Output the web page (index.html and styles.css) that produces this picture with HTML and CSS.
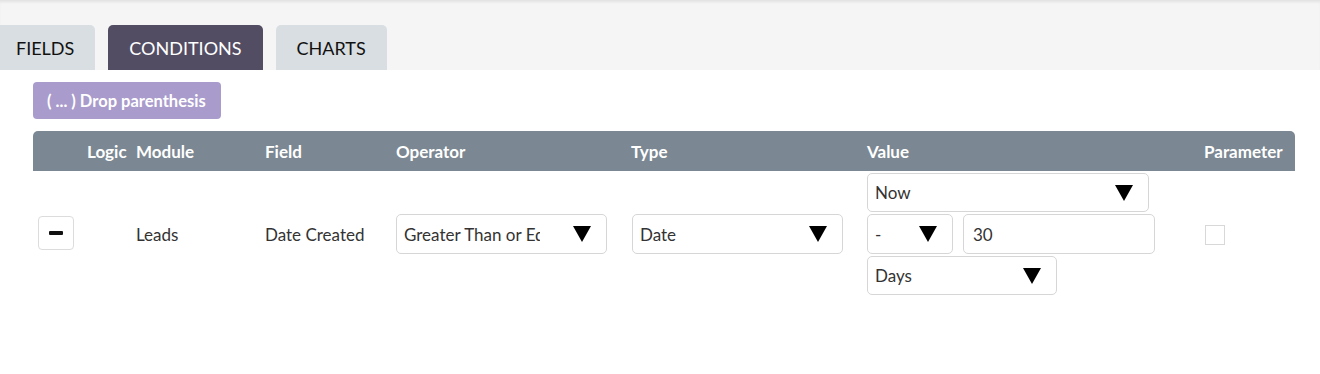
FILE: index.html
```html
<!DOCTYPE html>
<html>
<head>
<meta charset="utf-8">
<link rel="stylesheet" href="styles.css">
</head>
<body>
<div class="band">
  <div class="tabs">
    <div class="tab first">FIELDS</div>
    <div class="tab active">CONDITIONS</div>
    <div class="tab">CHARTS</div>
  </div>
</div>
<div class="content">
  <div class="btn-paren">( ... ) Drop parenthesis</div>
  <div class="grid head">
    <div></div>
    <div>Logic</div>
    <div>Module</div>
    <div>Field</div>
    <div>Operator</div>
    <div>Type</div>
    <div>Value</div>
    <div>Parameter</div>
  </div>
  <div class="grid row">
    <div class="cell"><div class="minus"><span></span></div></div>
    <div class="cell"></div>
    <div class="cell">Leads</div>
    <div class="cell">Date Created</div>
    <div class="cell"><div class="sel w-op"><span class="txt clip">Greater Than or Equal To</span><span class="arr"></span></div></div>
    <div class="cell"><div class="sel w-op"><span class="txt">Date</span><span class="arr"></span></div></div>
    <div class="cell value">
      <div class="sel w-now"><span class="txt">Now</span><span class="arr"></span></div>
      <div class="vline">
        <div class="sel w-sign"><span class="txt">-</span><span class="arr"></span></div>
        <div class="inp">30</div>
      </div>
      <div class="sel w-days"><span class="txt">Days</span><span class="arr"></span></div>
    </div>
    <div class="cell"><div class="chk"></div></div>
  </div>
</div>
</body>
</html>
```
FILE: styles.css
```css
* { box-sizing: border-box; }
html, body { margin: 0; background: #fff; }
body {
  font-family: Lato, "Open Sans", sans-serif;
  color: #333;
  width: 1320px;
  height: 374px;
  overflow: hidden;
}
.band {
  height: 70px;
  background: #f5f5f5;
  box-shadow: inset 0 3px 3px -1px rgba(0,0,0,0.08);
  padding-top: 25px;
}
.tabs {
  display: flex;
  gap: 13px;
  height: 45px;
  margin-left: -5px;
}
.tab {
  height: 45px;
  padding: 0 21px;
  display: flex;
  align-items: center;
  background: #d9dee2;
  color: #111;
  font-size: 18px;
  border-radius: 5px 5px 0 0;
  padding-top: 1px;
}
.tab.first { padding-right: 21px; }
.tab.active { background: #534d64; color: #fff; }
.content { padding: 12px 25px 0 33px; }
.btn-paren {
  width: 188px;
  height: 37px;
  background: #a99bcb;
  color: #fff;
  font-weight: 700;
  font-size: 16.5px;
  border-radius: 4px;
  display: flex;
  align-items: center;
  padding-left: 14px;
  margin-bottom: 12px;
  white-space: nowrap;
}
.grid {
  display: grid;
  grid-template-columns: 54px 49px 129px 131px 235px 236px 337px 91px;
}
.head {
  height: 40px;
  background: #7b8792;
  color: #fff;
  font-weight: 700;
  font-size: 17px;
  border-radius: 5px 5px 0 0;
  align-items: center;
  white-space: nowrap;
}
.row {
  height: 126px;
  font-size: 17px;
  color: #333;
  align-items: center;
}
.cell { display: flex; align-items: center; white-space: nowrap; }
.minus {
  margin-left: 5px;
  width: 36px;
  height: 34px;
  border: 1px solid #dcdcdc;
  border-radius: 4px;
  display: flex;
  align-items: center;
  justify-content: center;
  margin-top: -3px;
}
.minus span { width: 14px; height: 4px; background: #111; border-radius: 1px; }
.sel {
  height: 40px;
  border: 1px solid #d6d6d6;
  border-radius: 5px;
  display: flex;
  align-items: center;
  justify-content: space-between;
  padding: 0 15px 0 7px;
  background: #fff;
  color: #333;
  font-size: 17px;
}
.txt { white-space: nowrap; }
.txt.clip { width: 136px; overflow: hidden; }
.arr {
  width: 0; height: 0;
  border-left: 9px solid transparent;
  border-right: 9px solid transparent;
  border-top: 16px solid #000;
  flex: none;
}
.w-op { width: 211px; margin-left: 1px; }
.cell:nth-child(5) .w-op { margin-left: 0; }
.value { flex-direction: column; align-items: flex-start; gap: 2px; }
.w-now { width: 282px; height: 39px; }
.vline { display: flex; gap: 10px; }
.w-sign { width: 86px; }
.inp {
  width: 192px;
  height: 40px;
  border: 1px solid #d6d6d6;
  border-radius: 5px;
  display: flex;
  align-items: center;
  padding-left: 9px;
  font-size: 17px;
}
.w-days { width: 190px; height: 39px; }
.chk {
  width: 20px; height: 20px;
  border: 1px solid #d8d8d8;
  margin-left: 1px;
  margin-top: 2px;
}
```
